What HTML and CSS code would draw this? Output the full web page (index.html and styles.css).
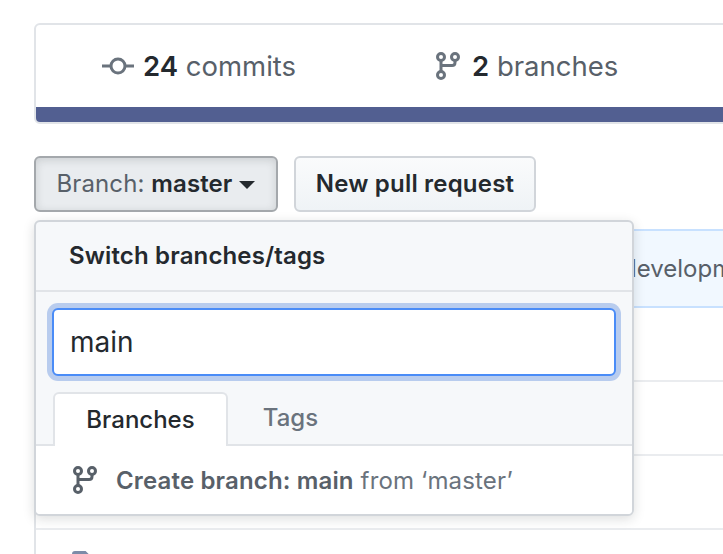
FILE: index.html
```html
<!DOCTYPE html>
<html lang="en">
<head>
    <meta charset="UTF-8">
    <title>Repository</title>
    <link rel="stylesheet" href="styles.css">
</head>
<body>
    <div class="container">
        <div class="overview">
            <div class="stats">
                <div class="stat stat-commits">
                    <svg class="icon-commit" width="32" height="18" viewBox="0 0 32 18">
                        <path d="M0 9h9M23 9h9" stroke="#6a737d" stroke-width="3" fill="none"/>
                        <circle cx="16" cy="9" r="7" stroke="#6a737d" stroke-width="3" fill="none"/>
                    </svg>
                    <span><strong>24</strong> commits</span>
                </div>
                <div class="stat stat-branches">
                    <svg class="icon-branch" width="24" height="28" viewBox="0 0 24 28">
                        <g stroke="#6a737d" stroke-width="3" fill="none">
                            <circle cx="5" cy="5" r="3.5"/>
                            <circle cx="19" cy="5" r="3.5"/>
                            <circle cx="5" cy="23" r="3.5"/>
                            <path d="M5 8.5v11M19 8.5v2q0 3-3 3H5"/>
                        </g>
                    </svg>
                    <span><strong>2</strong> branches</span>
                </div>
            </div>
            <div class="lang-bar"></div>
        </div>

        <div class="actions">
            <button type="button" class="btn btn-branch">Branch: <strong>master</strong><i class="caret"></i></button>
            <button type="button" class="btn btn-pull">New pull request</button>
        </div>

        <div class="files">
            <div class="dropdown">
                <div class="dropdown-title">Switch branches/tags</div>
                <div class="dropdown-filter">
                    <input type="text" class="filter-input" value="main">
                </div>
                <div class="tabs">
                    <span class="tab selected">Branches</span>
                    <span class="tab">Tags</span>
                </div>
                <div class="create-row">
                    <svg class="icon-branch" width="24" height="28" viewBox="0 0 24 28">
                        <g stroke="#586069" stroke-width="3" fill="none">
                            <circle cx="5" cy="5" r="3.5"/>
                            <circle cx="19" cy="5" r="3.5"/>
                            <circle cx="5" cy="23" r="3.5"/>
                            <path d="M5 8.5v11M19 8.5v2q0 3-3 3H5"/>
                        </g>
                    </svg>
                    <span><strong>Create branch: main</strong> from ‘master’</span>
                </div>
            </div>

            <div class="banner"><span class="banner-text">development</span></div>
            <div class="file-row"></div>
            <div class="file-row"></div>
            <div class="file-row"></div>
            <div class="file-row file-row-last">
                <svg class="icon-file" width="20" height="26" viewBox="0 0 20 26">
                    <path d="M1.5 26V3q0-1.500 1.500-1.500h10l5.500 5.500V26" stroke="#7c8ba8" stroke-width="3" fill="none"/>
                </svg>
            </div>
        </div>
    </div>
</body>
</html>
```

FILE: styles.css
```css
html, body {
    margin: 0;
    padding: 0;
    height: 554px;
    overflow: hidden;
    background: white;
}

body {
    font-family: Inter, "Open Sans", sans-serif;
    color: #24292e;
}

.container {
    width: 800px;
    padding: 23px 0 0 34px;
}

strong {
    font-weight: 600;
}

.overview {
    border: 2px solid #e1e4e8;
    border-radius: 6px;
    overflow: hidden;
    height: 97px;
    display: flex;
    flex-direction: column;
}

.stats {
    flex: 1;
    display: flex;
    align-items: center;
    font-size: 27.5px;
    color: #586069;
    padding-left: 66px;
}

.stats strong {
    color: #24292e;
}

.stat {
    display: flex;
    align-items: center;
}

.stat-commits {
    gap: 9px;
    width: 334px;
}

.stat-branches {
    gap: 12px;
}

.lang-bar {
    height: 15px;
    background: #525f91;
}

.actions {
    display: flex;
    gap: 16px;
    margin-top: 32px;
}

.btn {
    height: 56px;
    border: 2px solid #d1d5da;
    border-radius: 6px;
    font-family: inherit;
    font-size: 24px;
    padding: 0 0 2px;
    color: #24292e;
    background: linear-gradient(#fafbfc, #eff3f6);
}

.btn-branch {
    width: 244px;
    color: #586069;
    letter-spacing: 0.1px;
    background: #e9ecef;
    border-color: #a4a8ac;
    box-shadow: inset 0 2px 8px rgba(27,31,35,0.15);
}

.btn-branch strong {
    color: #24292e;
}

.btn-pull {
    width: 242px;
    font-weight: 600;
    letter-spacing: 0.2px;
}

.caret {
    display: inline-block;
    margin-left: 7px;
    vertical-align: 3px;
    border: 8px solid transparent;
    border-top-color: #24292e;
    border-bottom-width: 0;
}

.files {
    position: relative;
    margin-top: 17px;
    border-left: 2px solid #e1e4e8;
    height: 330px;
}

.dropdown {
    position: absolute;
    top: -9px;
    left: -2px;
    z-index: 2;
    width: 596px;
    border: 2px solid #d1d5da;
    border-radius: 6px;
    background: #f6f8fa;
    box-shadow: 0 3px 12px rgba(27,31,35,0.15);
    overflow: hidden;
}

.dropdown-title {
    height: 68px;
    line-height: 68px;
    padding-left: 33px;
    font-size: 24px;
    font-weight: 600;
    letter-spacing: 0.15px;
    border-bottom: 2px solid #e1e4e8;
}

.dropdown-filter {
    padding: 16px;
}

.filter-input {
    display: block;
    box-sizing: border-box;
    width: 564px;
    height: 68px;
    padding: 0 16px;
    border: 2px solid #4a8cf7;
    border-radius: 6px;
    outline: none;
    font-family: inherit;
    font-size: 28px;
    color: #24292e;
    box-shadow: 0 0 0 5px #b8ccee;
}

.tabs {
    display: flex;
    height: 52px;
    padding-left: 17px;
    border-bottom: 2px solid #e1e4e8;
    font-size: 24px;
}

.tab {
    width: 175px;
    box-sizing: border-box;
    height: 54px;
    line-height: 52px;
    text-align: center;
    color: #6a737d;
    font-weight: 500;
}

.tab.selected {
    color: #24292e;
    background: white;
    border: 2px solid #e1e4e8;
    border-bottom: none;
    border-radius: 6px 6px 0 0;
}

.tab + .tab {
    width: 125px;
}

.create-row {
    display: flex;
    align-items: center;
    gap: 19px;
    height: 68px;
    padding-left: 37px;
    background: white;
    font-size: 24px;
    letter-spacing: 0.15px;
    color: #6a737d;
}

.create-row strong {
    color: #586069;
}

.banner {
    height: 75px;
    background: #f1f8ff;
    border-top: 2px solid #c8e1ff;
    border-bottom: 2px solid #c8e1ff;
    display: flex;
    align-items: center;
}

.banner-text {
    margin-left: 586px;
    font-size: 24px;
    color: #586069;
}

.file-row {
    height: 72px;
    border-bottom: 2px solid #eaecef;
}

.file-row-last {
    border-bottom: none;
    padding: 21px 0 0 36px;
}
```
